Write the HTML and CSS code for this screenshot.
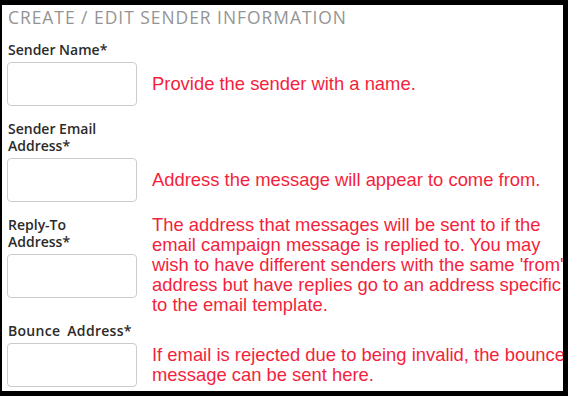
FILE: index.html
```html
<!doctype html>
<html lang="en">
<head>
    <meta charset="UTF-8">
    <meta name="viewport" content="width=device-width, initial-scale=1.0">
    <title>Sender Information</title>
    <link rel="stylesheet" href="styles.css">
</head>
<body>
<div class="panel">
    <h2 class="title">CREATE / EDIT SENDER INFORMATION</h2>
    <div class="field">
        <div class="field-main">
            <label for="sender_name">Sender Name*</label>
            <input type="text" id="sender_name">
        </div>
        <p class="hint">Provide the sender with a name.</p>
    </div>
    <div class="field">
        <div class="field-main">
            <label for="sender_email">Sender Email Address*</label>
            <input type="text" id="sender_email">
        </div>
        <p class="hint">Address the message will appear to come from.</p>
    </div>
    <div class="field field-top">
        <div class="field-main">
            <label for="reply_to">Reply-To Address*</label>
            <input type="text" id="reply_to">
        </div>
        <p class="hint">The address that messages will be sent to if the email campaign message is replied to. You may wish to have different senders with the same 'from' address but have replies go to an address specific to the email template.</p>
    </div>
    <div class="field">
        <div class="field-main">
            <label for="bounce" class="label-wide">Bounce Address*</label>
            <input type="text" id="bounce">
        </div>
        <p class="hint">If email is rejected due to being invalid, the bounce message can be sent here.</p>
    </div>
</div>
</body>
</html>
```

FILE: styles.css
```css
body {
    background-color: #000000;
    margin: 0;
    font-family: "Open Sans", sans-serif;
}

.panel {
    background-color: #ffffff;
    margin: 5px 5px 0 2px;
    height: 386px;
    padding: 1px 0 0 5px;
    box-sizing: border-box;
    overflow: hidden;
}

.title {
    margin: 0 0 13px 1px;
    font-size: 17.4px;
    line-height: 22px;
    font-weight: normal;
    letter-spacing: 1px;
    color: #949494;
}

/* Field rows */
.field {
    display: flex;
    align-items: flex-end;
    gap: 14px;
    margin-bottom: 14px;
}

.field-top {
    align-items: flex-start;
    margin-bottom: 7px;
}

.field-main {
    width: 131px;
    flex-shrink: 0;
}

label {
    display: block;
    max-width: 122px;
    margin: 0 0 4px 1px;
    font-size: 14px;
    line-height: 17px;
    font-weight: 600;
    color: #2b2b2b;
}

.label-wide {
    max-width: none;
    word-spacing: 3px;
    letter-spacing: 0.3px;
}

input[type="text"] {
    display: block;
    width: 130px;
    height: 44px;
    margin: 0;
    box-sizing: border-box;
    border: 1px solid #cccccc;
    border-radius: 4px;
    background-color: #ffffff;
}

.hint {
    margin: 0;
    width: 418px;
    flex-shrink: 0;
    height: 44px;
    display: flex;
    align-items: center;
    font-family: "Liberation Sans", Arial, sans-serif;
    font-size: 18.4px;
    line-height: 20px;
    color: #f41f3d;
}

.field-top .hint {
    display: block;
    height: auto;
    margin-top: -1px;
}
```
